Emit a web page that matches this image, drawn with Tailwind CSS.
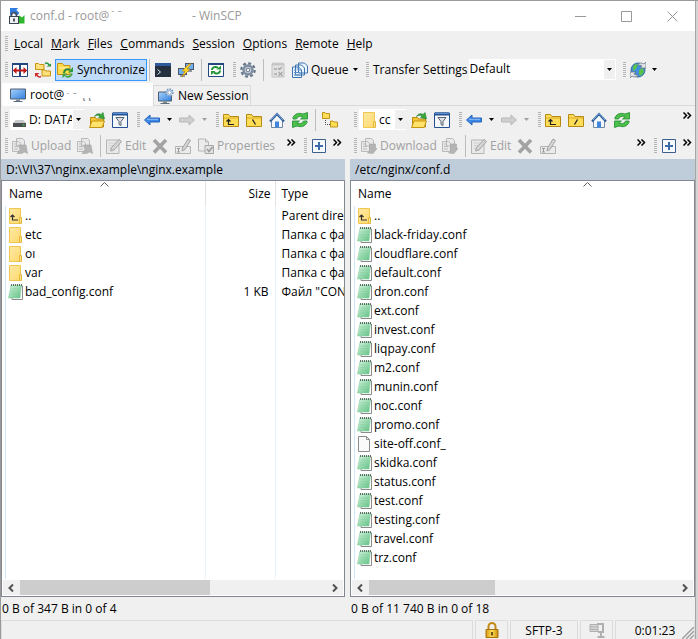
<!DOCTYPE html>
<html lang="en">
<head>
    <meta charset="UTF-8">
    <meta name="viewport" content="width=device-width, initial-scale=1.0">
    <title>conf.d - WinSCP</title>
    <script src="https://cdn.jsdelivr.net/npm/@tailwindcss/browser@4"></script>
</head>
<body class="h-screen overflow-hidden border-t border-l border-[#9a9a9a] bg-[#d4d4d4] pr-[2px] font-['Open_Sans','Noto_Sans',sans-serif] text-[12px] leading-4 text-black">

    <!-- Icon set -->
    <svg class="absolute size-0" xmlns="http://www.w3.org/2000/svg">
        <defs>
            <linearGradient id="g-folder" x1="0" y1="0" x2="1" y2="1"><stop offset="0" stop-color="#ffe9a6"/><stop offset="1" stop-color="#ffd96b"/></linearGradient>
            <linearGradient id="g-note" x1="0" y1="0" x2="1" y2="1"><stop offset="0" stop-color="#d6f5e0"/><stop offset="1" stop-color="#5fc083"/></linearGradient>
            <linearGradient id="g-screen" x1="0" y1="0" x2="1" y2="1"><stop offset="0" stop-color="#a9d2fb"/><stop offset="1" stop-color="#2f7fe0"/></linearGradient>
            <linearGradient id="g-lock" x1="0" y1="0" x2="1" y2="0"><stop offset="0" stop-color="#d79a10"/><stop offset=".5" stop-color="#ffe25a"/><stop offset="1" stop-color="#c98a08"/></linearGradient>
        </defs>
        <symbol id="app" viewBox="0 0 16 16">
            <path d="M1 0h8L7.500 2l3 3-3 3-3-3L3 6.500 1 8z" fill="#2f7de0"/>
            <path d="M15.500 7v8.500H8l2-2-2-3 2.500-3 2.500 2z" fill="#2fb52b"/>
            <path d="M2.500 9V7a2.500 2.500 0 0 1 5 0v2" fill="none" stroke="#4a525c" stroke-width="1.600"/>
            <rect x=".5" y="8.500" width="9" height="7" fill="#eef1f5" stroke="#3c4550"/>
            <path d="M5 10.500v3" stroke="#222" stroke-width="1.500"/>
        </symbol>
        <symbol id="compare" viewBox="0 0 16 16">
            <path d="M.5 2h15v12.500H.5z" fill="#fff" stroke="#24477f"/>
            <path d="M0 2h16M8 1v14" stroke="#24477f" stroke-width="2"/>
            <path d="M.8 8.500 4.500 5v2.500h7V5l3.700 3.500-3.700 3.500V9.500h-7V12z" fill="#c01818"/>
        </symbol>
        <symbol id="syncbrowse" viewBox="0 0 16 16">
            <path d="M.5 7.500V1.500h3l1 1H9v5zM7 14V8h3l1 1h4.500v5z" fill="#ffe07a" stroke="#c79312"/>
            <path d="M10 1.500c2-1 3.500 0 4 1.500" fill="none" stroke="#26953a" stroke-width="1.500"/><path d="M11.500 4.500H16V1.500z" fill="#26953a"/>
            <path d="M6 14.500c-2 1-3.500 0-4-1.500" fill="none" stroke="#d02a2a" stroke-width="1.500"/><path d="M4.500 11H0v4z" fill="#d02a2a"/>
        </symbol>
        <symbol id="synchronize" viewBox="0 0 16 16">
            <path d="M.5 12.500v-11h5l1.500 2h6v9z" fill="#ffda4d" stroke="#c79312"/>
            <path d="M2 6h9" stroke="#fff3b5"/>
            <path d="M7 11c0-3 3-5 6-3" fill="none" stroke="#23863a" stroke-width="2"/><path d="M11 10.500 16 10V5z" fill="#2f9d3f"/>
            <path d="M15 11.500c-1 3-4 4-6.500 2.500" fill="none" stroke="#47a845" stroke-width="2"/><path d="M10.500 11.500H5.500V16z" fill="#3fa03c"/>
        </symbol>
        <symbol id="console" viewBox="0 0 16 16">
            <path d="M0 1h16v14H0z" fill="#26303e"/><path d="M0 1h16v3H0z" fill="#2d5a9c"/>
            <path d="m2.500 7.500 3 2.500-3 2.500" fill="none" stroke="#dfe8f2"/>
        </symbol>
        <symbol id="putty" viewBox="0 0 16 16">
            <path d="M7 1h9v7H7zM0 6h9v7H0z" fill="#4a5666"/><path d="M8 2h7v5H8zM1 7h7v5H1z" fill="#6fb0f5"/>
            <path d="M10 9h4M2 14h5" stroke="#6d7886" stroke-width="1.500"/>
            <path d="M11 2 4 9h3l-3 6 8-8H9l4-5z" fill="#ffd52b" stroke="#c48a0a" stroke-width=".7"/>
        </symbol>
        <symbol id="refreshbox" viewBox="0 0 16 16">
            <path d="M.5 1.500h15v13H.5z" fill="#fff" stroke="#24477f"/><path d="M0 2h16" stroke="#24477f" stroke-width="2"/>
            <path d="M4 8c0-3 4-4 6-2M12 8.500c0 3-4 4-6 2" fill="none" stroke="#209438" stroke-width="2"/>
            <path d="M8.500 7.500H13V3.500zM7.500 9H3v4z" fill="#209438"/>
        </symbol>
        <symbol id="gear" viewBox="0 0 16 16">
            <circle cx="8" cy="8" r="6.700" fill="none" stroke="#66758a" stroke-width="2.200" stroke-dasharray="2.900 2.360"/>
            <circle cx="8" cy="8" r="4.500" fill="#c4ccd6" stroke="#7d8ca1" stroke-width="2.400"/>
            <circle cx="8" cy="8" r="1.800" fill="#f4f4f4" stroke="#6f7f94"/>
        </symbol>
        <symbol id="checklist" viewBox="0 0 16 16">
            <path d="M2 2h12v13H2z" fill="#e2e2e2" stroke="#c2c2c2"/><path d="M3 .5v3m2-3v3m2-3v3m2-3v3m2-3v3m2-3v3" stroke="#b8b8b8"/>
            <path d="m8 6 1.500 1.500L12 5M8.500 10l4 4m0-4-4 4M4 7h3m-3 5h3" fill="none" stroke="#a8a8a8" stroke-width="1.300"/>
        </symbol>
        <symbol id="queue" viewBox="0 0 16 16">
            <path d="M6.500 1h6l3 3v7h-9zM3.500 3h6l3 3v7h-9zM.5 5h6l3 3v7.500h-9z" fill="#eaf4ff" stroke="#3f74b0"/>
            <path d="M6 5v3h3M2 8h2.500M2 10.500h6M2 13h6" fill="none" stroke="#5b8fc9"/>
        </symbol>
        <symbol id="globe" viewBox="0 0 16 16">
            <circle cx="8" cy="8" r="7" fill="#3f8fe0" stroke="#356a9e"/><path d="M3 4c2-2 4-2 5-1L6 7 3 9zM9 8l4-2 1 4-3 4-2-2z" fill="#5cc04c"/>
            <path d="M16 0v6h-6l2-2c-1.500-1-3-1-4.500-1C9 .8 12 .5 14 2zM0 16v-6h6l-2 2c1.500 1 3 1 4.500 1-1.500 2.200-4.500 2.500-6.500 1z" fill="#e1e5ea" stroke="#6a7683" stroke-width=".8"/>
        </symbol>
        <symbol id="monitor" viewBox="0 0 16 16">
            <path d="M.5 2h15v10H.5z" fill="url(#g-screen)" stroke="#4e5e70"/><path d="M6 12.500h4V14H6z" fill="#7f8b98"/><path d="M3.500 14.500h9" stroke="#5f6c7a"/>
        </symbol>
        <symbol id="newsession" viewBox="0 0 16 16">
            <path d="M.5 4h13v9H.5z" fill="url(#g-screen)" stroke="#4e5e70"/><path d="M5 13.500h4V15H5z" fill="#7f8b98"/><path d="M2.500 15.500h9" stroke="#5f6c7a"/>
            <circle cx="11.500" cy="4.500" r="3.300" fill="#e9f2fb" stroke="#7396bd" stroke-width="1.800" stroke-dasharray="1.500 1"/><circle cx="11.500" cy="4.500" r="1.800" fill="#fff" stroke="#89a8c9"/>
        </symbol>
        <symbol id="drive" viewBox="0 0 16 16">
            <path d="m3.500 8-2.500 3h13l-2.500-3z" fill="#c7c9cb"/><path d="M1 11h13v4H1z" fill="#4c4f52"/><path d="M10.500 13h2" stroke="#43e04a"/>
        </symbol>
        <symbol id="openfolder" viewBox="0 0 16 16">
            <path d="M1.500 15V5.500h5l1 1.500h7V15z" fill="#f4c736" stroke="#b98a10"/><path d="M.5 15.500 3 9h12.500L13 15.500z" fill="#ffe36b" stroke="#c79312"/>
            <path d="M5.500 4.500C7 1.500 10 1 12 2.500L14 .5 15.500 7 9.500 5.500 11 4c-2-1-3.500-1-5.500.500z" fill="#38a63a" stroke="#1e7d2c" stroke-width=".6"/>
        </symbol>
        <symbol id="filter" viewBox="0 0 16 16">
            <path d="M.5 1h15v14.500H.5z" fill="#f4f8fd" stroke="#24508f"/><path d="M1 2h14" stroke="#24508f" stroke-width="3"/><path d="M1 1.500h14" stroke="#5c93d6"/>
            <path d="M4 5.500h8L9 9.500v4l-2-1V9.500z" fill="#dcdfe3" stroke="#59626d"/>
        </symbol>
        <symbol id="back" viewBox="0 0 16 16"><path d="M.5 8 6 3v3h9.500v4H6v3z" fill="#3d87e8" stroke="#2463b8" stroke-linejoin="round"/><path d="M3 7.300h11" stroke="#8dbcf6"/></symbol>
        <symbol id="forward" viewBox="0 0 16 16"><path d="M15.500 8 10 3v3H.5v4H10v3z" fill="#cfcfcf" stroke="#b7b7b7" stroke-linejoin="round"/></symbol>
        <symbol id="folderbase" viewBox="0 0 16 16"><path d="M.5 14.500v-12h5l1.500 2h8.500v10z" fill="#ffdd55" stroke="#b58a16"/><path d="M1 6h14" stroke="#d9ab2d"/></symbol>
        <symbol id="folderup" viewBox="0 0 16 16"><use href="#folderbase"/><path d="M5.500 7.500v5H11M3.500 9.500l2-2 2 2" fill="none" stroke="#222" stroke-width="1.200"/></symbol>
        <symbol id="folderroot" viewBox="0 0 16 16"><use href="#folderbase"/><path d="m6.500 7.500 3 5" stroke="#222" stroke-width="1.300"/></symbol>
        <symbol id="folderslash" viewBox="0 0 16 16"><use href="#folderbase"/><path d="m9.500 7.500-3 5" stroke="#222" stroke-width="1.300"/></symbol>
        <symbol id="home" viewBox="0 0 16 16">
            <path d="M2.500 8 8 3l5.500 5v7.500h-11z" fill="#f4f8fd" stroke="#7089a5"/><path d="M6 9.500h4v6H6z" fill="#3f86dc"/>
            <path d="M1 9.500 8 2l7 7.500" fill="none" stroke="#2f5f98" stroke-width="2.200"/><path d="m2 8 6-6.500L14 8" fill="none" stroke="#8fb9e8" stroke-width=".8"/>
        </symbol>
        <symbol id="refresh" viewBox="0 0 16 16">
            <path d="M1 7V5.500C3 1.500 7 .5 11 2L15.500.5V7H8.500L11 4.700C8 3.700 5.500 4.500 4.500 7zM15 9v1.500c-2 4-6 5-10 3.500L.5 15.500V9h7L5 11.300c3 1 5.500.2 6.500-2.300z" fill="#4cc04a" stroke="#1f8a2f" stroke-width=".8"/>
        </symbol>
        <symbol id="tree" viewBox="0 0 16 16">
            <path d="M.5 6.500v-6h2.500l1 1h3.500v5zM8.500 15V9H11l1 1h3.500v5z" fill="#ffdd55" stroke="#c0921a"/><path d="M3.500 8v4.500H8" fill="none" stroke="#444" stroke-dasharray="1 1"/>
        </symbol>
        <symbol id="transfer" viewBox="0 0 16 16">
            <path d="M4.500.5h6l2 2V8h-8zM.5 3.500h6l2 2v8h-8z" fill="#e9e9e9" stroke="#b9b9b9"/><path d="M2 6h3M2 8.500h4M2 11h4" stroke="#b9b9b9"/>
            <path d="M6.500 7H14l1.500 8.500-3-1.500-3 1.500H5l3-4z" fill="#b4b4b4" stroke="#a6a6a6" stroke-width=".6"/>
        </symbol>
        <symbol id="download" viewBox="0 0 16 16">
            <path d="M4.500.5h6l2 2V8h-8zM.5 3.500h6l2 2v8h-8z" fill="#e9e9e9" stroke="#b9b9b9"/><path d="M2 6h3M2 8.500h4M2 11h4" stroke="#b9b9b9"/>
            <path d="M8.500 6h6v4.500l1.500 0-4 5-5.500-.5 2-2z" fill="#b4b4b4" stroke="#a6a6a6" stroke-width=".6"/>
        </symbol>
        <symbol id="edit" viewBox="0 0 16 16">
            <path d="M.5 2h12.500v13.500H.5z" fill="#e9e9e9" stroke="#b5b5b5"/><path d="M2.500 5h6m-6 2.500h5m-5 2.500h3" stroke="#cfcfcf"/><path d="m4.500 13 1-3.500L13 1.500l2.500 2L8 12z" fill="#d4d4d4" stroke="#a3a3a3"/>
        </symbol>
        <symbol id="delete" viewBox="0 0 16 16"><path d="m2 2 12 12.500M14 2 2 14.500" stroke="#a3a3a3" stroke-width="3.600"/></symbol>
        <symbol id="rename" viewBox="0 0 16 16">
            <path d="M.5 8.500h15v7H.5z" fill="#ebebeb" stroke="#b3b3b3"/><path d="M2 10.500h3m-1.500 0v3.500M2 14h3" stroke="#999"/><path d="m7 13 .5-3L13 1l2.500 1.500L10 11.500z" fill="#d4d4d4" stroke="#a3a3a3"/>
        </symbol>
        <symbol id="props" viewBox="0 0 16 16">
            <path d="M.5 1h7l3 3v9h-10zM7.500 1v3h3" fill="#ececec" stroke="#b5b5b5"/><path d="M7 7.500h8.500v8H7z" fill="#e2e2e2" stroke="#a8a8a8"/><path d="m9 11 2 2.500 3.500-4.500" fill="none" stroke="#999" stroke-width="1.500"/>
        </symbol>
        <symbol id="plus" viewBox="0 0 16 16"><path d="M1.500 1.500h13v13h-13z" fill="#f6f9fd" stroke="#3d5f8c"/><path d="M8 4v8M4 8h8" stroke="#3d6aa8" stroke-width="2"/></symbol>
        <symbol id="dir" viewBox="0 0 16 16"><path d="M1.500.5h11v15h-11z" fill="url(#g-folder)" stroke="#efc64f"/><path d="M11.500 9.500h2v6h-2z" fill="#ffe08a" stroke="#e5b83c"/></symbol>
        <symbol id="parent" viewBox="0 0 16 16"><use href="#dir"/><path d="M4.500 7v5H10M2.500 9l2-2 2 2" fill="none" stroke="#333" stroke-width="1.200"/></symbol>
        <symbol id="conf" viewBox="0 0 16 16">
            <path d="M5 2h9.500v13.500H4z" fill="#fff" stroke="#8b8b8b"/><path d="M3 1h10.500L12 14H.5z" fill="url(#g-note)" stroke="#8ccfa2" stroke-width=".6"/>
            <path d="M3.500 5h8m-8.300 2.500h8M3 10h8" stroke="#83cf9b" stroke-width=".6"/><path d="M3 1h11" stroke="#3c4a42" stroke-width="1.600" stroke-dasharray="1 1"/>
        </symbol>
        <symbol id="blank" viewBox="0 0 16 16"><path d="M1.500.5h8l3 3v12h-11zM9.500.5v3h3" fill="#fafafa" stroke="#8c8c8c"/></symbol>
        <symbol id="lock" viewBox="0 0 16 16">
            <path d="M4.500 8V4.500a3.500 3.500 0 0 1 7 0V8" fill="none" stroke="#c28a12" stroke-width="2"/><path d="M2 7.500h12v8H2z" fill="url(#g-lock)" stroke="#a87208"/><path d="M8 10v3.500" stroke="#4a3000" stroke-width="1.600"/>
        </symbol>
        <symbol id="zip" viewBox="0 0 16 16">
            <path d="M1 2.500h8v7H1z" fill="#d6d6d6" stroke="#b0b0b0"/><path d="M1 5h8M1 7.500h8" stroke="#b0b0b0"/><path d="M8 2h6v8H9m3 0v5m-3.500 0h7" fill="none" stroke="#b0b0b0" stroke-width="2"/>
        </symbol>
        <symbol id="down" viewBox="0 0 7 4"><path d="M0 0h7L3.500 4z" fill="currentColor"/></symbol>
        <symbol id="more" viewBox="0 0 9 7"><path d="m.5.5 3 3-3 3m4-6 3 3-3 3" fill="none" stroke="currentColor" stroke-width="1.500"/></symbol>
        <symbol id="sort" viewBox="0 0 9 5"><path d="m.5 4.500 4-4 4 4" fill="none" stroke="#606060"/></symbol>
        <symbol id="left" viewBox="0 0 6 8"><path d="M5 .5 1.500 4 5 7.500" fill="none" stroke="#505050" stroke-width="2"/></symbol>
        <symbol id="right" viewBox="0 0 6 8"><path d="M1 .5 4.500 4 1 7.500" fill="none" stroke="#505050" stroke-width="2"/></symbol>
        <symbol id="grip" viewBox="0 0 3 16"><path d="M1.500 0v16" stroke="#b4b4b4" stroke-width="3" stroke-dasharray="1 1"/></symbol>
    </svg>

    <div class="flex h-full flex-col border-r border-[#a6a6a6] bg-[#f0f0f0]">
        <!-- Title bar -->
        <header class="flex h-[30px] shrink-0 items-center bg-white pl-2 text-[#999]">
            <svg class="size-4"><use href="#app"/></svg>
            <h1 class="ml-[5px] flex w-[162px]">conf.d - root@<span class="h-1 overflow-hidden text-gray-400">19</span></h1>
            <span>- WinSCP</span>
            <div class="ml-auto flex">
                <button class="flex h-[30px] w-[46px] items-center justify-center" aria-label="Minimize"><svg class="size-[11px]" viewBox="0 0 11 11"><path d="M0 5.500h11" stroke="#999"/></svg></button>
                <button class="flex h-[30px] w-[46px] items-center justify-center" aria-label="Maximize"><svg class="size-[11px]" viewBox="0 0 11 11"><path d="M.5.5h10v10H.5z" fill="none" stroke="#999"/></svg></button>
                <button class="flex h-[30px] w-[46px] items-center justify-center" aria-label="Close"><svg class="size-[11px]" viewBox="0 0 11 11"><path d="m.5.500 10 10m0-10-10 10" stroke="#999"/></svg></button>
            </div>
        </header>

        <!-- Menu -->
        <nav class="flex h-[26px] shrink-0 items-center gap-2 pl-1">
            <svg class="-mr-[2px] h-4 w-[3px]"><use href="#grip"/></svg>
            <button><u>L</u>ocal</button>
            <button><u>M</u>ark</button>
            <button><u>F</u>iles</button>
            <button><u>C</u>ommands</button>
            <button><u>S</u>ession</button>
            <button><u>O</u>ptions</button>
            <button><u>R</u>emote</button>
            <button><u>H</u>elp</button>
        </nav>

        <!-- Main toolbar -->
        <div class="flex h-[25px] shrink-0 items-center pl-1">
            <svg class="mr-px h-4 w-[3px] shrink-0"><use href="#grip"/></svg>
            <button class="w-[23px] shrink-0 pl-[3px]" aria-label="Compare"><svg class="size-4"><use href="#compare"/></svg></button>
            <button class="w-[23px] shrink-0 pl-[3px]" aria-label="Synchronize browsing"><svg class="size-4"><use href="#syncbrowse"/></svg></button>
            <button class="flex h-[22px] w-[92px] shrink-0 items-center gap-1 border border-[#3399ff] bg-[#c0dcf9] pl-px"><svg class="size-4 shrink-0"><use href="#synchronize"/></svg>Synchronize</button>
            <i class="mx-[2px] h-[22px] w-px shrink-0 bg-[#bdbdbd]"></i>
            <button class="w-[23px] shrink-0 pl-[3px]" aria-label="Console"><svg class="size-4"><use href="#console"/></svg></button>
            <button class="w-[23px] shrink-0 pl-[3px]" aria-label="PuTTY"><svg class="size-4"><use href="#putty"/></svg></button>
            <i class="mx-[3px] h-[22px] w-px shrink-0 bg-[#bdbdbd]"></i>
            <button class="w-[23px] shrink-0 pl-[3px]" aria-label="Refresh"><svg class="size-4"><use href="#refreshbox"/></svg></button>
            <svg class="mr-px ml-[5px] h-4 w-[3px] shrink-0"><use href="#grip"/></svg>
            <button class="w-[23px] shrink-0 pl-[3px]" aria-label="Preferences"><svg class="size-4"><use href="#gear"/></svg></button>
            <i class="mx-[3px] h-[22px] w-px shrink-0 bg-[#bdbdbd]"></i>
            <button class="w-[23px] shrink-0 pl-[3px]" aria-label="Queue list"><svg class="size-4"><use href="#checklist"/></svg></button>
            <button class="flex w-[74px] shrink-0 items-center pl-[2px]"><svg class="mr-[3px] size-4"><use href="#queue"/></svg>Queue<svg class="mr-[6px] ml-auto h-[3px] w-[5px]"><use href="#down"/></svg></button>
            <svg class="ml-[2px] h-4 w-[3px] shrink-0"><use href="#grip"/></svg>
            <label for="preset" class="mr-px ml-1 shrink-0 whitespace-nowrap">Transfer Settings</label>
            <div class="relative h-[21px] w-[147px] bg-white">
                <select id="preset" class="h-full w-full appearance-none px-px pb-px"><option>Default</option></select>
                <span class="pointer-events-none absolute inset-y-px right-px flex w-[11px] items-center justify-center bg-[#f0f0f0]"><svg class="h-[3px] w-[5px]"><use href="#down"/></svg></span>
            </div>
            <svg class="ml-[7px] h-4 w-[3px] shrink-0"><use href="#grip"/></svg>
            <button class="ml-1 flex items-center gap-[6px]" aria-label="Reconnect"><svg class="size-4"><use href="#globe"/></svg><svg class="h-[3px] w-[5px]"><use href="#down"/></svg></button>
        </div>

        <!-- Session tabs -->
        <div class="flex h-[24px] shrink-0 items-end border-b border-[#d9d9d9] pl-px">
            <button class="-mb-px flex h-[23px] w-[151px] items-center bg-white pl-2"><svg class="mr-1 size-4"><use href="#monitor"/></svg>root@<span class="h-[10px] w-[18px] overflow-hidden"><span class="block h-1 overflow-hidden text-left text-gray-400">19</span></span><span class="flex h-3 w-4 items-end overflow-hidden text-gray-500"><span class="h-[3px] overflow-hidden leading-[0px]">cc</span></span></button>
            <button class="flex h-[20px] w-[98px] items-center gap-1 border border-b-0 border-[#d9d9d9] pl-1 whitespace-nowrap"><svg class="size-4 shrink-0"><use href="#newsession"/></svg>New Session</button>
        </div>

        <main class="grid min-h-0 flex-1 grid-cols-[344fr_345fr] gap-[5px]">
            <!-- Local panel -->
            <section class="flex min-h-0 min-w-0 flex-col">
                <div class="flex h-[27px] shrink-0 items-center pl-1">
                    <svg class="mr-[2px] h-4 w-[3px]"><use href="#grip"/></svg>
                    <div class="relative flex h-[21px] w-[74px] shrink-0 items-center bg-white pl-[2px]">
                        <svg class="size-4 shrink-0"><use href="#drive"/></svg>
                        <select aria-label="Drive" class="ml-px w-[43px] appearance-none"><option>D: DATA</option></select>
                        <span class="pointer-events-none absolute inset-y-px right-0 flex w-[11px] items-center justify-center bg-[#f0f0f0]"><svg class="h-[3px] w-[5px]"><use href="#down"/></svg></span>
                    </div>
                    <button class="ml-[2px] w-[23px] pl-[3px]" aria-label="Open directory"><svg class="size-4"><use href="#openfolder"/></svg></button>
                    <button class="w-[23px] pl-[3px]" aria-label="Filter"><svg class="size-4"><use href="#filter"/></svg></button>
                    <svg class="ml-[5px] h-4 w-[3px]"><use href="#grip"/></svg>
                    <button class="ml-1 flex w-[35px] items-center gap-[7px]" aria-label="Back"><svg class="size-4"><use href="#back"/></svg><svg class="h-[3px] w-[5px]"><use href="#down"/></svg></button>
                    <button class="flex w-[33px] items-center gap-[7px] text-[#a0a0a0]" aria-label="Forward"><svg class="size-4"><use href="#forward"/></svg><svg class="h-[3px] w-[5px]"><use href="#down"/></svg></button>
                    <svg class="ml-1 h-4 w-[3px]"><use href="#grip"/></svg>
                    <button class="ml-px w-[23px] pl-[3px]" aria-label="Parent directory"><svg class="size-4"><use href="#folderup"/></svg></button>
                    <button class="w-[23px] pl-[3px]" aria-label="Root directory"><svg class="size-4"><use href="#folderroot"/></svg></button>
                    <button class="w-[23px] pl-[3px]" aria-label="Home"><svg class="size-4"><use href="#home"/></svg></button>
                    <button class="w-[23px] pl-[3px]" aria-label="Refresh"><svg class="size-4"><use href="#refresh"/></svg></button>
                    <i class="mx-[3px] h-[22px] w-px bg-[#bdbdbd]"></i>
                    <button class="w-[23px] pl-[3px]" aria-label="Tree"><svg class="size-4"><use href="#tree"/></svg></button>
                </div>
                <div class="flex h-[26px] shrink-0 items-center pl-1 text-[#a0a0a0]">
                    <svg class="h-4 w-[3px]"><use href="#grip"/></svg>
                    <button class="ml-1 flex w-[62px] items-center gap-[3px]"><svg class="size-4"><use href="#transfer"/></svg>Upload</button>
                    <button class="w-[23px] pl-[3px]" aria-label="Upload options"><svg class="size-4"><use href="#transfer"/></svg></button>
                    <i class="mx-[3px] h-[22px] w-px bg-[#bdbdbd]"></i>
                    <button class="ml-[2px] flex w-[43px] items-center gap-[3px]"><svg class="size-4"><use href="#edit"/></svg>Edit</button>
                    <button class="w-[23px] pl-[3px]" aria-label="Delete"><svg class="size-4"><use href="#delete"/></svg></button>
                    <button class="w-[23px] pl-[3px]" aria-label="Rename"><svg class="size-4"><use href="#rename"/></svg></button>
                    <button class="ml-[3px] flex items-center gap-[3px]"><svg class="size-4"><use href="#props"/></svg>Properties</button>
                    <button class="mb-2 ml-auto text-black" aria-label="More"><svg class="h-[7px] w-[9px]"><use href="#more"/></svg></button>
                    <svg class="ml-2 h-4 w-[3px]"><use href="#grip"/></svg>
                    <button class="ml-1 flex w-[22px]" aria-label="Select"><svg class="size-4"><use href="#plus"/></svg></button>
                    <button class="mr-[3px] mb-2 text-black" aria-label="More"><svg class="h-[7px] w-[9px]"><use href="#more"/></svg></button>
                </div>
                <div class="h-[21px] shrink-0 bg-[#bfcddb] pl-[5px] leading-[21px]">D:\VI\37\nginx.example\nginx.example</div>
                <div class="flex min-h-0 flex-1 flex-col border border-[#828790] bg-white">
                    <div class="min-h-0 flex-1 overflow-hidden">
                        <table class="h-full w-full table-fixed border-collapse">
                            <thead>
                                <tr class="h-[25px] text-left">
                                    <th class="relative w-[203px] border-r border-[#e2e2e2] pl-[7px] font-normal">Name<svg class="absolute top-px left-[98px] h-[5px] w-[9px]"><use href="#sort"/></svg></th>
                                    <th class="w-[70px] border-r border-[#e2e2e2] pr-1 text-right font-normal">Size</th>
                                    <th class="pl-[6px] font-normal">Type</th>
                                </tr>
                            </thead>
                            <tbody id="localFiles"></tbody>
                        </table>
                    </div>
                    <div class="m-px flex h-[15px] shrink-0 items-center bg-[#f0f0f0]">
                        <svg class="mr-[6px] ml-[5px] h-2 w-[6px]"><use href="#left"/></svg>
                        <div class="h-full flex-1"><div class="h-full w-[62%] bg-[#cdcdcd]"></div></div>
                        <svg class="mx-[5px] h-2 w-[6px]"><use href="#right"/></svg>
                    </div>
                </div>
                <div class="h-[23px] shrink-0 pl-px leading-[23px]">0 B of 347 B in 0 of 4</div>
            </section>

            <!-- Remote panel -->
            <section class="flex min-h-0 min-w-0 flex-col">
                <div class="flex h-[27px] shrink-0 items-center pl-1">
                    <svg class="mr-[2px] h-4 w-[3px]"><use href="#grip"/></svg>
                    <div class="relative flex h-[21px] w-[47px] shrink-0 items-center bg-white pl-[3px]">
                        <svg class="size-4 shrink-0"><use href="#dir"/></svg>
                        <select aria-label="Directory" class="ml-px w-[14px] appearance-none"><option>cc</option></select>
                        <span class="pointer-events-none absolute inset-y-px right-0 flex w-[11px] items-center justify-center bg-[#f0f0f0]"><svg class="h-[3px] w-[5px]"><use href="#down"/></svg></span>
                    </div>
                    <button class="ml-[2px] w-[23px] pl-[3px]" aria-label="Open directory"><svg class="size-4"><use href="#openfolder"/></svg></button>
                    <button class="w-[23px] pl-[3px]" aria-label="Filter"><svg class="size-4"><use href="#filter"/></svg></button>
                    <svg class="ml-[5px] h-4 w-[3px]"><use href="#grip"/></svg>
                    <button class="ml-1 flex w-[35px] items-center gap-[7px]" aria-label="Back"><svg class="size-4"><use href="#back"/></svg><svg class="h-[3px] w-[5px]"><use href="#down"/></svg></button>
                    <button class="flex w-[33px] items-center gap-[7px] text-[#a0a0a0]" aria-label="Forward"><svg class="size-4"><use href="#forward"/></svg><svg class="h-[3px] w-[5px]"><use href="#down"/></svg></button>
                    <svg class="ml-1 h-4 w-[3px]"><use href="#grip"/></svg>
                    <button class="ml-px w-[23px] pl-[3px]" aria-label="Parent directory"><svg class="size-4"><use href="#folderup"/></svg></button>
                    <button class="w-[23px] pl-[3px]" aria-label="Root directory"><svg class="size-4"><use href="#folderslash"/></svg></button>
                    <button class="w-[23px] pl-[3px]" aria-label="Home"><svg class="size-4"><use href="#home"/></svg></button>
                    <button class="w-[23px] pl-[3px]" aria-label="Refresh"><svg class="size-4"><use href="#refresh"/></svg></button>
                    <button class="mr-[3px] mb-2 ml-auto" aria-label="More"><svg class="h-[7px] w-[9px]"><use href="#more"/></svg></button>
                </div>
                <div class="flex h-[26px] shrink-0 items-center pl-1 text-[#a0a0a0]">
                    <svg class="h-4 w-[3px]"><use href="#grip"/></svg>
                    <button class="ml-1 flex w-[78px] items-center gap-[3px]"><svg class="size-4"><use href="#download"/></svg>Download</button>
                    <button class="w-[23px] pl-[3px]" aria-label="Download options"><svg class="size-4"><use href="#download"/></svg></button>
                    <i class="mx-[3px] h-[22px] w-px bg-[#bdbdbd]"></i>
                    <button class="ml-[2px] flex w-[43px] items-center gap-[3px]"><svg class="size-4"><use href="#edit"/></svg>Edit</button>
                    <button class="w-[23px] pl-[3px]" aria-label="Delete"><svg class="size-4"><use href="#delete"/></svg></button>
                    <button class="w-[23px] pl-[3px]" aria-label="Rename"><svg class="size-4"><use href="#rename"/></svg></button>
                    <button class="mb-2 ml-auto text-black" aria-label="More"><svg class="h-[7px] w-[9px]"><use href="#more"/></svg></button>
                    <svg class="ml-2 h-4 w-[3px]"><use href="#grip"/></svg>
                    <button class="ml-1 flex w-[22px]" aria-label="Select"><svg class="size-4"><use href="#plus"/></svg></button>
                    <button class="mr-[3px] mb-2 text-black" aria-label="More"><svg class="h-[7px] w-[9px]"><use href="#more"/></svg></button>
                </div>
                <div class="h-[21px] shrink-0 bg-[#bfcddb] pl-[5px] leading-[21px]">/etc/nginx/conf.d</div>
                <div class="flex min-h-0 flex-1 flex-col border border-[#828790] bg-white">
                    <div class="min-h-0 flex-1 overflow-hidden">
                        <table class="h-full w-full table-fixed border-collapse">
                            <thead>
                                <tr class="h-[25px] text-left">
                                    <th class="relative pl-[7px] font-normal">Name<svg class="absolute top-px left-[232px] h-[5px] w-[9px]"><use href="#sort"/></svg></th>
                                </tr>
                            </thead>
                            <tbody id="remoteFiles"></tbody>
                        </table>
                    </div>
                    <div class="m-px flex h-[15px] shrink-0 items-center bg-[#f0f0f0]">
                        <svg class="mr-[6px] ml-[5px] h-2 w-[6px]"><use href="#left"/></svg>
                        <div class="h-full flex-1"><div class="h-full w-[41%] bg-[#cdcdcd]"></div></div>
                        <svg class="mx-[5px] h-2 w-[6px]"><use href="#right"/></svg>
                    </div>
                </div>
                <div class="h-[23px] shrink-0 pl-px leading-[23px]">0 B of 11 740 B in 0 of 18</div>
            </section>
        </main>

        <!-- Status bar -->
        <footer class="flex h-[19px] shrink-0 gap-[2px] leading-[19px]">
            <div class="flex-1 border border-b-0 border-[#dcdcdc]"></div>
            <div class="flex w-[33px] items-center justify-center border border-b-0 border-[#dcdcdc]"><svg class="size-4"><use href="#lock"/></svg></div>
            <div class="w-[68px] border border-b-0 border-[#dcdcdc] text-center">SFTP-3</div>
            <div class="flex w-[33px] items-center justify-center border border-b-0 border-[#dcdcdc]"><svg class="size-4"><use href="#zip"/></svg></div>
            <div class="relative w-[80px] border border-b-0 border-[#dcdcdc] text-center">0:01:23<svg class="absolute right-0 bottom-0 size-3" viewBox="0 0 12 12"><path d="M0 12 12 0M4 12l8-8M8 12l4-4" stroke="#a0a0a0" stroke-width="1.500"/></svg></div>
        </footer>
    </div>

    <script>
        const localFiles = [
            ['parent', '..', '', 'Parent directory'],
            ['dir', 'etc', '', 'Папка с файлами'],
            ['dir', 'o\u0131', '', 'Папка с файлами'],
            ['dir', 'var', '', 'Папка с файлами'],
            ['conf', 'bad_config.conf', '1 KB', 'Файл "CONF"'],
        ];
        const remoteFiles = ['black-friday.conf', 'cloudflare.conf', 'default.conf', 'dron.conf', 'ext.conf', 'invest.conf',
            'liqpay.conf', 'm2.conf', 'munin.conf', 'noc.conf', 'promo.conf', 'site-off.conf_', 'skidka.conf', 'status.conf',
            'test.conf', 'testing.conf', 'travel.conf', 'trz.conf'];

        const nameCell = (icon, name) =>
            `<div class="ml-[3px] flex h-[19px] items-center border-l border-[#cfe6fb] pl-[2px]"><svg class="mr-px size-4 shrink-0"><use href="#${icon}"/></svg>${name}</div>`;

        document.getElementById('localFiles').innerHTML = localFiles.map(([icon, name, size, type]) => `
            <tr class="h-[19px]">
                <td class="border-r border-[#e9f3fb] p-0">${nameCell(icon, name)}</td>
                <td class="border-r border-[#e9f3fb] p-0 pr-[6px] text-right">${size}</td>
                <td class="overflow-hidden p-0 pl-[6px] whitespace-nowrap">${type}</td>
            </tr>`).join('') + `
            <tr>
                <td class="h-full border-r border-[#e9f3fb] p-0"><div class="ml-[3px] h-full border-l border-[#cfe6fb]"></div></td>
                <td class="border-r border-[#e9f3fb]"></td>
                <td></td>
            </tr>`;

        document.getElementById('remoteFiles').innerHTML = `<tr class="h-[19px]"><td class="p-0">${nameCell('parent', '..')}</td></tr>` +
            remoteFiles.map(name => `<tr class="h-[19px]"><td class="p-0">${nameCell(name.endsWith('_') ? 'blank' : 'conf', name)}</td></tr>`).join('') +
            `<tr><td class="h-full p-0"><div class="ml-[3px] h-full border-l border-[#cfe6fb]"></div></td></tr>`;
    </script>
</body>
</html>
